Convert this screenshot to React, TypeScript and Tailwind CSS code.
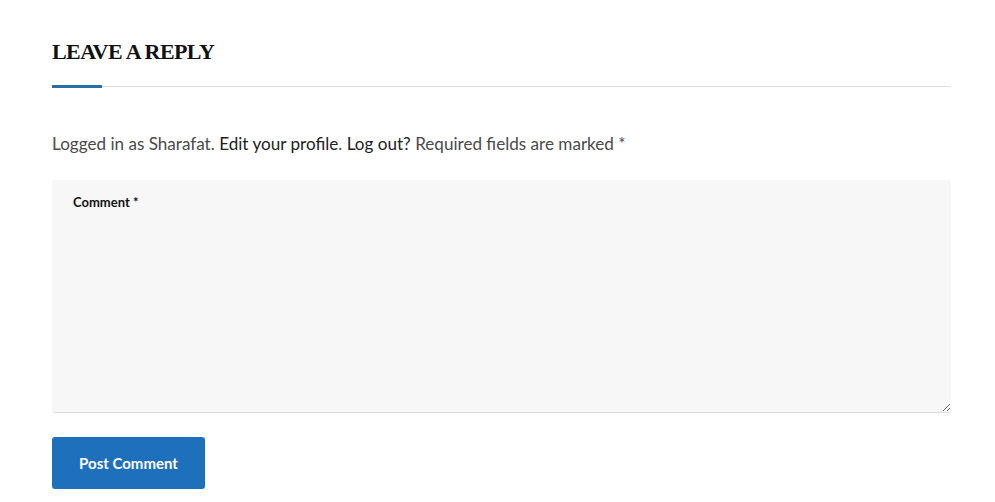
import React from "react";

export default function App() {
  return (
    <div className="w-[995px] h-[502px] bg-white overflow-hidden" style={{ fontFamily: "Lato, 'Noto Sans', sans-serif" }}>
      <div className="ml-[52px] w-[899px] pt-[38px]">
        <h3 className="text-[22px] leading-[28px] font-bold text-[#111] tracking-[-0.6px]" style={{ fontFamily: "'Liberation Serif', serif" }}>
          LEAVE A REPLY
        </h3>
        <div className="mt-[19px] flex items-center h-[3px]">
          <div className="w-[50px] h-[3px] bg-[#2a6ea8]" />
          <div className="flex-1 h-px bg-[#dcdcdc]" />
        </div>
        <p className="mt-[44px] text-[17.1px] leading-[23px] text-[#4a4a4a]">
          Logged in as Sharafat. <a className="text-[#222]">Edit your profile</a>. <a className="text-[#222]">Log out?</a> Required fields are marked *
        </p>
        <div className="relative mt-[25px] h-[233px]">
          <textarea className="w-full h-full bg-[#f7f7f7] rounded-[3px] border-b border-[#dedede] outline-none block resize-y" />
          <label className="absolute left-[21px] top-[13px] text-[13px] font-bold text-[#111]">Comment *</label>
        </div>
        <button className="mt-[24px] w-[153px] h-[52px] bg-[#1e70bd] rounded-[3px] text-white font-bold text-[15px]">
          Post Comment
        </button>
      </div>
    </div>
  );
}
